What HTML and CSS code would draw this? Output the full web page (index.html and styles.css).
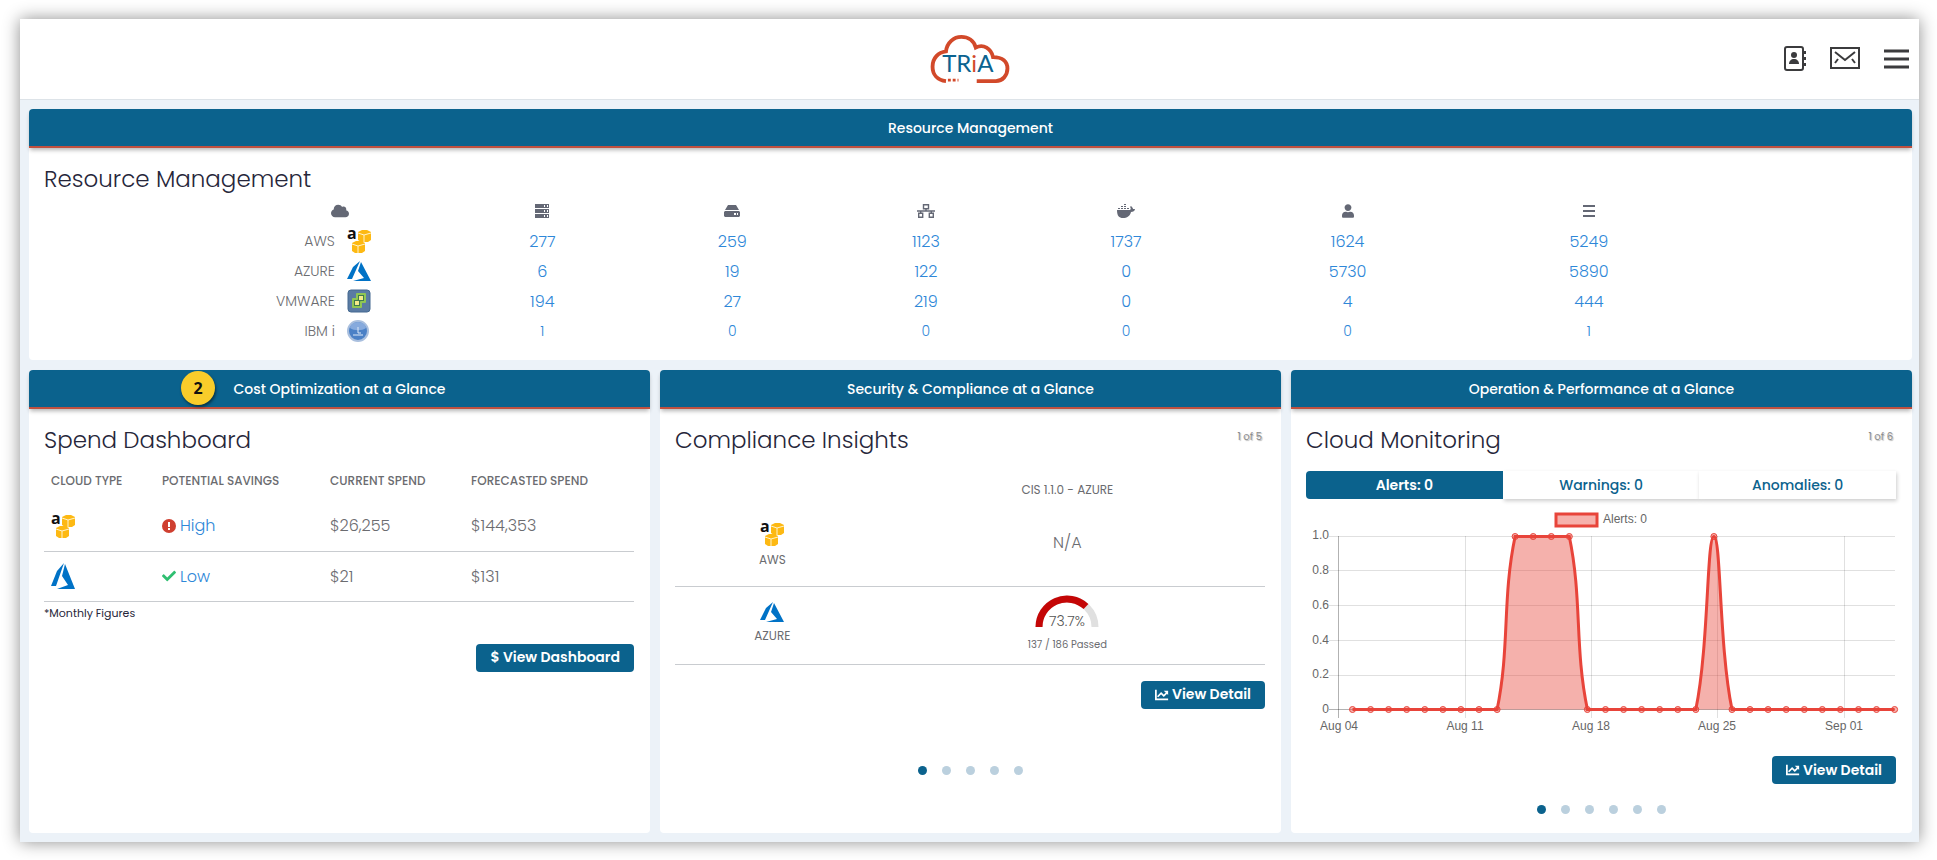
FILE: index.html
```
<!DOCTYPE html>
<html lang="en">
    <head>
        <meta charset="UTF-8" />
        <meta name="viewport" content="width=device-width, initial-scale=1.0" />
        <title>TRiA Dashboard</title>

        <link rel="stylesheet" href="styles.css">
    </head>
    <body>
        <!-- shared icons -->
        <svg class="sprite" aria-hidden="true">
            <symbol id="aws" viewBox="0 0 24 24">
                <path d="M11 3l4-2h5l4 2v8l-3 2h-7l-3-2zM5 14l4-2h5l4 2v8l-3 2H8l-3-2z" fill="#fdb913" />
                <path d="M11 4l6 2 7-2M17 6v7M5 15l6 2 7-2M11 17v7" fill="none" stroke="#fff3cc" />
                <text x="0" y="10" class="aws_letter">a</text>
            </symbol>
            <symbol id="azure" viewBox="0 0 24 20">
                <path fill="#0072c6" d="M13 0L6 6 0 18h5zM14 1l-3 9 6 7-11 3h18z" />
            </symbol>
            <symbol id="azure_tall" viewBox="0 0 24 26">
                <path fill="#0072c6" d="M13 0L6 8 0 23h5zM14 1l-3 12 6 9-11 4h18z" />
            </symbol>
            <symbol id="chart" viewBox="0 0 16 14">
                <path d="M1 1v11h14" fill="none" stroke="currentColor" stroke-width="2" />
                <path d="M3 9l4-4 3 3 4-4" fill="none" stroke="currentColor" stroke-width="2" />
                <path d="M10 2h5v5z" fill="currentColor" />
            </symbol>
        </svg>

        <div class="app">
            <header class="topbar">
                <a href="#" class="logo" aria-label="TRiA">
                    <svg width="80" height="48" viewBox="0 0 82 50">
                        <path d="M16 48C7 47 2 41 2 33c0-9 6-15 14-16C17 8 24 2 32 2c7 0 13 4 15 11 8-4 16 1 18 10 10 0 15 5 15 12s-5 13-12 13H48" fill="none" stroke="#d2492a" stroke-width="4" />
                        <path d="M18 47h11" stroke="#d2492a" stroke-width="3" stroke-dasharray="3 2" />
                        <text x="12" y="39" class="logo_text">TR<tspan fill="#d2492a">i</tspan>A</text>
                    </svg>
                </a>
                <nav class="top_actions">
                    <button aria-label="Contacts">
                        <svg width="22" height="26" viewBox="0 0 22 26">
                            <rect x="1" y="1" width="18" height="23" rx="2" fill="none" stroke="#3b3b3d" stroke-width="2" />
                            <circle cx="10" cy="9" r="3" fill="#3b3b3d" />
                            <path d="M5 18c0-3 2-5 5-5s5 2 5 5z" fill="#3b3b3d" />
                            <path d="M20 5h2v3h-2zM20 11h2v3h-2zM20 17h2v3h-2z" fill="#3b3b3d" />
                        </svg>
                    </button>
                    <button aria-label="Messages">
                        <svg width="30" height="24" viewBox="0 0 30 24">
                            <path d="M1 1h28v20H1zM5 5l10 8 10-8M5 16l3-4M25 16l-3-4" fill="none" stroke="#3b3b3d" stroke-width="2" />
                        </svg>
                    </button>
                    <button aria-label="Menu">
                        <svg width="25" height="20" viewBox="0 0 25 20">
                            <path d="M0 2h25M0 10h25M0 18h25" stroke="#3b3b3d" stroke-width="3" />
                        </svg>
                    </button>
                </nav>
            </header>

            <main>
                <section class="card">
                    <h2 class="banner">Resource Management</h2>
                    <div class="card_body">
                        <h3>Resource Management</h3>
                        <table class="resources">
                            <colgroup>
                                <col class="c_cloud" /><col class="c_server" /><col class="c_disk" /><col class="c_network" /><col class="c_docker" /><col class="c_user" /><col class="c_list" />
                            </colgroup>
                            <thead>
                                <tr>
                                    <th aria-label="Cloud">
                                        <svg width="18" height="14" viewBox="0 32 640 448"><path d="M537.6 226.600c4.100-10.700 6.400-22.400 6.400-34.600 0-53-43-96-96-96-19.700 0-38.100 6-53.300 16.200C367 64.200 315.300 32 256 32c-88.400 0-160 71.600-160 160 0 2.700.1 5.400.2 8.100C40.200 219.800 0 273.200 0 336c0 79.500 64.500 144 144 144h368c70.700 0 128-57.300 128-128 0-61.900-44-113.600-102.400-125.400z" /></svg>
                                    </th>
                                    <th aria-label="Servers">
                                        <svg width="14" height="14" viewBox="0 0 14 14"><path fill-rule="evenodd" d="M0 0h14v4H0zM0 5h14v4H0zM0 10h14v4H0zM9 1h1v2H9zM12 1h1v2h-1zM9 6h1v2H9zM12 6h1v2h-1zM9 11h1v2H9zM12 11h1v2h-1z" /></svg>
                                    </th>
                                    <th aria-label="Disks">
                                        <svg width="16" height="12" viewBox="0 0 16 12"><path fill-rule="evenodd" d="M4 0h8l3 5H1zM1 6h14l1 1v4l-1 1H1l-1-1V7zM10 8v2h2V8zM13 8v2h1V8z" /></svg>
                                    </th>
                                    <th aria-label="Networks">
                                        <svg width="18" height="14" viewBox="0 0 18 14"><path d="M6.500.700h5v4h-5zM1.700 9.300h4v4h-4zM12.300 9.300h4v4h-4zM9 5v2M0 7h18M3.700 7v2M14.300 7v2" fill="none" stroke="#646875" stroke-width="1.400" /></svg>
                                    </th>
                                    <th aria-label="Containers">
                                        <svg width="18" height="14" viewBox="0 0 18 14"><path d="M0 6h13c1-1 1-2 0-3l1-1c1 1 2 2 2 3h2c0 2-2 3-4 3-1 4-4 6-8 6-4 0-6-2-6-8zM1 4h2v1H1zM4 4h2v1H4zM7 4h2v1H7zM10 4h2v1h-2zM4 2h2v1H4zM7 2h2v1H7zM7 0h2v1H7z" /></svg>
                                    </th>
                                    <th aria-label="Users">
                                        <svg width="12" height="14" viewBox="0 0 448 512"><path d="M224 256c70.700 0 128-57.300 128-128S294.700 0 224 0 96 57.300 96 128s57.300 128 128 128zm89.600 32h-16.700c-22.200 10.200-46.900 16-72.900 16s-50.600-5.800-72.900-16h-16.700C60.200 288 0 348.200 0 422.400V464c0 26.500 21.500 48 48 48h352c26.500 0 48-21.500 48-48v-41.600c0-74.200-60.200-134.400-134.400-134.400z" /></svg>
                                    </th>
                                    <th aria-label="Total">
                                        <svg width="12" height="12" viewBox="0 0 12 12"><path d="M0 1h12M0 6h12M0 11h12" stroke="#646875" stroke-width="2" /></svg>
                                    </th>
                                </tr>
                            </thead>
                            <tbody>
                                <tr>
                                    <td><span class="cloud">AWS <svg width="24" height="24"><use href="#aws" /></svg></span></td>
                                    <td><a href="#">277</a></td>
                                    <td><a href="#">259</a></td>
                                    <td><a href="#">1123</a></td>
                                    <td><a href="#">1737</a></td>
                                    <td><a href="#">1624</a></td>
                                    <td><a href="#">5249</a></td>
                                </tr>
                                <tr>
                                    <td><span class="cloud">AZURE <svg width="24" height="20"><use href="#azure" /></svg></span></td>
                                    <td><a href="#">6</a></td>
                                    <td><a href="#">19</a></td>
                                    <td><a href="#">122</a></td>
                                    <td><a href="#">0</a></td>
                                    <td><a href="#">5730</a></td>
                                    <td><a href="#">5890</a></td>
                                </tr>
                                <tr>
                                    <td><span class="cloud">VMWARE
                                        <svg width="24" height="24" viewBox="0 0 24 24">
                                            <rect x="1" y="1" width="22" height="22" rx="3" fill="#5a7ba3" stroke="#456990" />
                                            <path d="M10 5h8v8h-4v5H6v-8h4z" fill="#3f7a4e" stroke="#8fc653" stroke-width="2" stroke-linejoin="round" />
                                            <path d="M12 7h4v4h-4zM8 12h4v4H8z" fill="#f4e98a" />
                                        </svg></span></td>
                                    <td><a href="#">194</a></td>
                                    <td><a href="#">27</a></td>
                                    <td><a href="#">219</a></td>
                                    <td><a href="#">0</a></td>
                                    <td><a href="#">4</a></td>
                                    <td><a href="#">444</a></td>
                                </tr>
                                <tr class="small">
                                    <td><span class="cloud">IBM i
                                        <svg width="24" height="20" viewBox="0 0 24 20">
                                            <circle cx="11" cy="10" r="10" fill="#4a80c6" stroke="#a9bfde" stroke-width="2" />
                                            <path d="M3 7a8 6 0 0 1 16 0c-4 3-12 3-16 0z" fill="#86aadd" />
                                            <path d="M11 6v6h3M6 14h10" fill="none" stroke="#dbe8f8" />
                                        </svg></span></td>
                                    <td><a href="#">1</a></td>
                                    <td><a href="#">0</a></td>
                                    <td><a href="#">0</a></td>
                                    <td><a href="#">0</a></td>
                                    <td><a href="#">0</a></td>
                                    <td><a href="#">1</a></td>
                                </tr>
                            </tbody>
                        </table>
                    </div>
                </section>

                <div class="cards">
                    <section class="card">
                        <h2 class="banner"><span class="badge">2</span>Cost Optimization at a Glance</h2>
                        <div class="card_body">
                            <h3>Spend Dashboard</h3>
                            <table class="spend">
                                <colgroup>
                                    <col class="s_type" /><col class="s_savings" /><col class="s_current" /><col class="s_forecast" />
                                </colgroup>
                                <thead>
                                    <tr>
                                        <th>CLOUD TYPE</th>
                                        <th>POTENTIAL SAVINGS</th>
                                        <th>CURRENT SPEND</th>
                                        <th>FORECASTED SPEND</th>
                                    </tr>
                                </thead>
                                <tbody>
                                    <tr>
                                        <td><svg width="24" height="24" role="img" aria-label="AWS"><use href="#aws" /></svg></td>
                                        <td>
                                            <a href="#" class="rating">
                                                <svg width="14" height="14" viewBox="0 0 14 14"><circle cx="7" cy="7" r="7" fill="#cf3f30" /><path d="M7 3v5M7 9v2" stroke="#fff" stroke-width="2" /></svg>
                                                High
                                            </a>
                                        </td>
                                        <td>$26,255</td>
                                        <td>$144,353</td>
                                    </tr>
                                    <tr>
                                        <td><svg width="24" height="26" role="img" aria-label="Azure"><use href="#azure_tall" /></svg></td>
                                        <td>
                                            <a href="#" class="rating">
                                                <svg width="14" height="14" viewBox="0 0 512 512"><path fill="#2fbf71" d="M173.900 439.400l-166.400-166.400c-10-10-10-26.200 0-36.200l36.200-36.200c10-10 26.200-10 36.200 0L192 312.700 432.100 72.600c10-10 26.200-10 36.200 0l36.200 36.200c10 10 10 26.200 0 36.200l-294.400 294.400c-10 10-26.200 10-36.200 0z" /></svg>
                                                Low
                                            </a>
                                        </td>
                                        <td>$21</td>
                                        <td>$131</td>
                                    </tr>
                                </tbody>
                            </table>
                            <p class="note">*Monthly Figures</p>
                            <button class="btn btn_spend">$ View Dashboard</button>
                        </div>
                    </section>

                    <section class="card">
                        <h2 class="banner">Security &amp; Compliance at a Glance</h2>
                        <div class="card_body">
                            <div class="title_row">
                                <h3>Compliance Insights</h3>
                                <span class="pager">1 of 5</span>
                            </div>
                            <table class="compliance">
                                <colgroup>
                                    <col class="p_cloud" /><col />
                                </colgroup>
                                <thead>
                                    <tr>
                                        <td></td>
                                        <th>CIS 1.1.0 - AZURE</th>
                                    </tr>
                                </thead>
                                <tbody>
                                    <tr>
                                        <th><svg width="24" height="24"><use href="#aws" /></svg>AWS</th>
                                        <td class="na">N/A</td>
                                    </tr>
                                    <tr>
                                        <th><svg width="24" height="20"><use href="#azure" /></svg>AZURE</th>
                                        <td>
                                            <svg class="gauge" width="64" height="32" viewBox="0 0 64 32">
                                                <path d="M4 32a28 28 0 0 1 56 0" fill="none" stroke="#e0e0e0" stroke-width="7" />
                                                <path d="M4 32a28 28 0 0 1 47-20.500" fill="none" stroke="#c40606" stroke-width="7" />
                                                <text x="32" y="31">73.7%</text>
                                            </svg>
                                            <span class="passed">137 / 186 Passed</span>
                                        </td>
                                    </tr>
                                </tbody>
                            </table>
                            <button class="btn btn_compliance"><svg width="14" height="14"><use href="#chart" /></svg> View Detail</button>
                            <div class="dots dots_compliance">
                                <button class="active" aria-label="Page 1"></button>
                                <button aria-label="Page 2"></button>
                                <button aria-label="Page 3"></button>
                                <button aria-label="Page 4"></button>
                                <button aria-label="Page 5"></button>
                            </div>
                        </div>
                    </section>

                    <section class="card">
                        <h2 class="banner">Operation &amp; Performance at a Glance</h2>
                        <div class="card_body">
                            <div class="title_row">
                                <h3>Cloud Monitoring</h3>
                                <span class="pager">1 of 6</span>
                            </div>
                            <div class="tabs">
                                <button class="active">Alerts: 0</button>
                                <button>Warnings: 0</button>
                                <button>Anomalies: 0</button>
                            </div>
                            <svg class="chart" viewBox="0 0 590 230">
                                <defs>
                                    <marker id="dot" viewBox="0 0 10 10" refX="5" refY="5" markerWidth="10" markerHeight="10" markerUnits="userSpaceOnUse">
                                        <circle cx="5" cy="5" r="3" fill="#e8443a" fill-opacity="0.4" stroke="#e8443a" />
                                    </marker>
                                </defs>
                                <rect x="250" y="9" width="41" height="12" fill="#f6b1ac" stroke="#e8443a" stroke-width="3" />
                                <text x="297" y="18">Alerts: 0</text>

                                <path class="grid" d="M23 31.500h566M23 65.500h566M23 100.500h566M23 135.500h566M23 170.500h566M159.500 31v182M285.500 31v182M411.500 31v182M538.500 31v182" />
                                <path class="axis" d="M32.500 31v182M23 204.500h566" />

                                <path d="M191.100 204.500C204 142 196 94 209.100 31.500H263.300C276.300 94 268.400 142 281.400 204.500zM389.800 204.500C402.800 142 400.700 31.500 407.900 31.500C415.100 31.500 413 142 426 204.500z" fill="#e8443a" fill-opacity="0.42" />
                                <path class="line" d="M46.500 204.500H64.600H82.600H100.700H118.800H136.900H154.900H173H191.100C204 142 196 94 209.100 31.500H227.200H245.300H263.300C276.300 94 268.400 142 281.400 204.500H299.500H317.600H335.600H353.700H371.800H389.800C402.800 142 400.700 31.500 407.900 31.500C415.100 31.500 413 142 426 204.500H444H462.100H480.200H498.300H516.300H534.400H552.500H570.500H588.600" />

                                <g text-anchor="end">
                                    <text x="23" y="34">1.0</text>
                                    <text x="23" y="69">0.8</text>
                                    <text x="23" y="104">0.6</text>
                                    <text x="23" y="139">0.4</text>
                                    <text x="23" y="173">0.2</text>
                                    <text x="23" y="208">0</text>
                                </g>
                                <g text-anchor="middle">
                                    <text x="33" y="225">Aug 04</text>
                                    <text x="159" y="225">Aug 11</text>
                                    <text x="285" y="225">Aug 18</text>
                                    <text x="411" y="225">Aug 25</text>
                                    <text x="538" y="225">Sep 01</text>
                                </g>
                            </svg>
                            <button class="btn btn_monitoring"><svg width="14" height="14"><use href="#chart" /></svg> View Detail</button>
                            <div class="dots">
                                <button class="active" aria-label="Page 1"></button>
                                <button aria-label="Page 2"></button>
                                <button aria-label="Page 3"></button>
                                <button aria-label="Page 4"></button>
                                <button aria-label="Page 5"></button>
                                <button aria-label="Page 6"></button>
                            </div>
                        </div>
                    </section>
                </div>
            </main>
        </div>
    </body>
</html>
```
FILE: styles.css
```
* {
    box-sizing: border-box;
}

body {
    margin: 0;
    padding: 19px 18px 18px 20px;
    min-height: 100vh;
    display: flex;
    background-color: #ffffff;
    font-family: Poppins, Inter, sans-serif;
    font-size: 16px;
    color: #6b6c70;
}

h2,
h3,
p {
    margin: 0;
}

a {
    color: #2e87d8;
    text-decoration: none;
}

button {
    font-family: inherit;
    border: none;
    cursor: pointer;
}

svg {
    overflow: visible;
}

.sprite {
    position: absolute;
    width: 0;
    height: 0;
}

.aws_letter {
    font: bold 16px "Open Sans", sans-serif;
    fill: #111111;
}

.app {
    flex: 1;
    display: flex;
    flex-direction: column;
    background-color: #ecf2f8;
    box-shadow: 0 0 16px rgba(0, 0, 0, 0.45);
}

/* header */
.topbar {
    height: 81px;
    padding: 0 10px;
    display: grid;
    grid-template-columns: 1fr auto 1fr;
    align-items: center;
    background-color: #ffffff;
    border-bottom: 1px solid #dde3e8;
}

.logo {
    grid-column: 2;
    display: flex;
}

.logo_text {
    font: 400 25px Lato, sans-serif;
    fill: #0b6390;
}

.top_actions {
    display: flex;
    justify-content: flex-end;
    align-items: center;
    gap: 24px;
}

.top_actions button {
    padding: 0;
    display: flex;
    background: none;
}

/* cards */
main {
    flex: 1;
    display: flex;
    flex-direction: column;
    gap: 10px;
    padding: 9px 7px 9px 9px;
}

.cards {
    flex: 1;
    display: grid;
    grid-template-columns: repeat(3, 1fr);
    gap: 10px;
}

.card {
    display: flex;
    flex-direction: column;
    background-color: #ffffff;
    border-radius: 4px;
}

.banner {
    position: relative;
    height: 39px;
    padding-top: 1px;
    display: flex;
    align-items: center;
    justify-content: center;
    background-color: #0b628d;
    border-bottom: 2px solid #c0503f;
    border-radius: 4px 4px 0 0;
    box-shadow: 0 3px 4px -1px rgba(0, 0, 0, 0.3);
    color: #ffffff;
    font-size: 14px;
    font-weight: 500;
}

.badge {
    position: absolute;
    top: 1px;
    left: 152px;
    width: 34px;
    height: 34px;
    border-radius: 50%;
    background-color: #f9cc2a;
    box-shadow: 1px 2px 3px rgba(0, 0, 0, 0.5);
    color: #111111;
    font: bold 16px/34px "Open Sans", sans-serif;
    text-align: center;
}

.card_body {
    flex: 1;
    display: flex;
    flex-direction: column;
    padding: 14px 16px 14px 15px;
}

h3 {
    color: #26263a;
    font-size: 23px;
    font-weight: 300;
    line-height: 34px;
}

.title_row {
    display: flex;
    justify-content: space-between;
}

.pager {
    padding: 8px 3px 0 0;
    font-size: 10px;
    line-height: 12px;
    color: #8a8a8a;
    text-shadow: 1px 1px 1px rgba(0, 0, 0, 0.3);
}

table {
    table-layout: fixed;
    border-collapse: collapse;
}

/* resource table */
.resources {
    width: 79.2%;
    margin-left: 194px;
}

.resources th,
.resources td {
    height: 30px;
    padding: 0;
    text-align: center;
}

.resources th svg {
    display: block;
    margin: 0 auto;
    fill: #646875;
}

.resources td {
    font-size: 16px;
    font-weight: 300;
}

.resources .small td {
    font-size: 14px;
}

.resources .cloud {
    display: flex;
    justify-content: flex-end;
    align-items: center;
    gap: 12px;
    padding-right: 71px;
    font-size: 14px;
}

.c_cloud {
    width: 13.9%;
}

.c_server {
    width: 13.7%;
}

.c_disk {
    width: 12.2%;
}

.c_network {
    width: 14.2%;
}

.c_docker {
    width: 13.1%;
}

.c_user {
    width: 17.1%;
}

.c_list {
    width: 15.8%;
}

/* spend table */
.spend th,
.spend td {
    height: 50px;
    padding: 0 7px;
    text-align: left;
    font-weight: 300;
}

.spend th {
    height: 44px;
    padding-top: 4px;
    font-size: 12px;
    font-weight: 500;
    white-space: nowrap;
}

.spend td {
    border-bottom: 1px solid #c9ccd0;
}

.spend svg {
    display: block;
}

.rating {
    display: flex;
    align-items: center;
    gap: 4px;
}

.s_type {
    width: 18.8%;
}

.s_savings {
    width: 28.5%;
}

.s_current {
    width: 23.9%;
}

.s_forecast {
    width: 28.8%;
}

.note {
    padding-top: 3px;
    color: #26263a;
    font-size: 11px;
    line-height: 16px;
}

.btn {
    align-self: flex-end;
    height: 28px;
    padding: 0 14px;
    display: flex;
    align-items: center;
    gap: 3px;
    background-color: #0b628d;
    border-radius: 4px;
    color: #ffffff;
    font-size: 14px;
    font-weight: 600;
}

.btn_spend {
    margin-top: 23px;
}

.btn_compliance {
    margin-top: 16px;
}

.btn_monitoring {
    margin-top: 21px;
}

/* compliance table */
.compliance {
    margin-top: 14px;
}

.compliance th,
.compliance td {
    padding: 0;
    text-align: center;
    font-weight: 400;
}

.compliance thead th {
    height: 37px;
    font-size: 12px;
}

.compliance tbody tr {
    border-bottom: 1px solid #c9ccd0;
}

.compliance tbody th {
    font-size: 12px;
    line-height: 16px;
}

.compliance tbody th,
.compliance tbody td {
    height: 78px;
    padding-bottom: 4px;
}

.compliance th svg,
.gauge {
    display: block;
    margin: 0 auto 6px;
}

.compliance .na {
    padding-bottom: 8px;
    font-weight: 300;
}

.gauge text {
    font-size: 14px;
    font-weight: 300;
    fill: #555555;
    text-anchor: middle;
}

.passed {
    display: block;
    padding-top: 6px;
    font-size: 10px;
    line-height: 12px;
}

.p_cloud {
    width: 33%;
}

/* pagination dots */
.dots {
    display: flex;
    justify-content: center;
    gap: 15px;
    margin-top: 21px;
}

.dots_compliance {
    margin-top: 57px;
}

.dots button {
    width: 9px;
    height: 9px;
    padding: 0;
    border-radius: 50%;
    background-color: #bbd0de;
}

.dots .active {
    background-color: #0b628d;
}

/* monitoring */
.tabs {
    display: flex;
    margin-top: 14px;
}

.tabs button {
    flex: 1;
    height: 28px;
    background-color: #ffffff;
    box-shadow: 1px 2px 4px rgba(0, 0, 0, 0.2);
    color: #0b628d;
    font-size: 14px;
    font-weight: 500;
}

.tabs .active {
    position: relative;
    background-color: #0b628d;
    border-radius: 4px 0 0 4px;
    box-shadow: none;
    color: #ffffff;
    font-weight: 600;
}

.chart {
    width: 100%;
    margin-top: 6px;
    font-family: "Liberation Sans", Arial, sans-serif;
    font-size: 12px;
    fill: #666666;
}

.chart .grid {
    stroke: rgba(0, 0, 0, 0.12);
}

.chart .axis {
    stroke: rgba(0, 0, 0, 0.3);
}

.chart .line {
    fill: none;
    stroke: #e8443a;
    stroke-width: 3;
    marker-start: url(#dot);
    marker-mid: url(#dot);
    marker-end: url(#dot);
}
```
